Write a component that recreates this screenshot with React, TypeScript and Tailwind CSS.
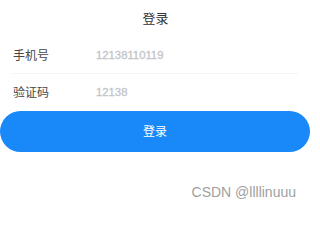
export default function App() {
  const font = { fontFamily: '"Liberation Sans", "Noto Sans CJK SC", sans-serif' };

  return (
    <div className="relative h-[208px] w-[311px] overflow-hidden bg-white" style={font}>
      <header className="flex h-[38px] items-center justify-center">
        <h1 className="text-[13px] text-[#323233]">登录</h1>
      </header>

      <form className="flex flex-col">
        <div className="mx-[13px] flex h-[36px] items-center border-b border-[#f2f3f5]">
          <label className="w-[83px] text-[12px] text-[#464648]">手机号</label>
          <input
            className="flex-1 bg-transparent text-[11.3px] text-[#c3c4c7] outline-none [-webkit-text-stroke:0.3px_#c3c4c7]"
            defaultValue="12138110119"
            readOnly
          />
        </div>
        <div className="mx-[13px] flex h-[37px] items-center">
          <label className="w-[83px] text-[12px] text-[#464648]">验证码</label>
          <input
            className="flex-1 bg-transparent text-[11.3px] text-[#c3c4c7] outline-none [-webkit-text-stroke:0.3px_#c3c4c7]"
            defaultValue="12138"
            readOnly
          />
        </div>
        <button
          type="button"
          className="flex h-[41px] w-[310px] items-center justify-center rounded-full bg-[#1989fa] text-[12px] text-white"
        >
          登录
        </button>
      </form>

      <div className="absolute right-[15px] top-[182px] text-[14px] text-[#a0a0a0]">CSDN @llllinuuu</div>
    </div>
  );
}
